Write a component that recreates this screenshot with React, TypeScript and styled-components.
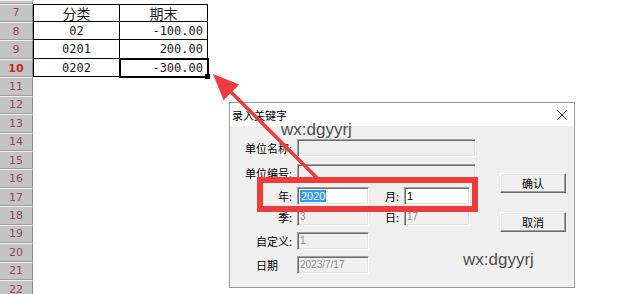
import React from "react";
import styled, { createGlobalStyle, css } from "styled-components";

const GlobalStyle = createGlobalStyle`
  html, body { margin: 0; padding: 0; background: #fff; overflow: hidden; }
  * { box-sizing: border-box; }
`;

const CJK = `"Noto Sans CJK SC", "Liberation Sans", sans-serif`;
const ROW_H = 18.45;

const Page = styled.div`
  position: relative;
  width: 638px;
  height: 294px;
  overflow: hidden;
  background: #fff;
`;

const Sheet = styled.div`
  display: flex;
  flex-direction: column;
`;

const Row = styled.div<{ $h?: number }>`
  display: flex;
  height: ${(p) => p.$h ?? ROW_H}px;
  flex: none;
`;

const RowHead = styled.div<{ $active?: boolean }>`
  width: 33px;
  height: 100%;
  background: #c4c4c4;
  border-top: 1px solid #f0f0f0;
  border-bottom: 1px solid #9e9e9e;
  border-right: 1px solid #8c8c8c;
  display: flex;
  align-items: center;
  justify-content: center;
  font-family: "DejaVu Sans", sans-serif;
  font-size: 11px;
  color: ${(p) => (p.$active ? "#c42a2a" : "#8a4c5c")};
  font-weight: ${(p) => (p.$active ? 700 : 400)};
`;

const Cell = styled.div<{
  $w: number;
  $first?: boolean;
  $top?: boolean;
  $align: "center" | "right";
  $head?: boolean;
  $selected?: boolean;
}>`
  position: relative;
  width: ${(p) => p.$w}px;
  height: 100%;
  border-right: 1px solid #000;
  border-bottom: 1px solid #000;
  ${(p) => p.$first && "border-left: 1px solid #000;"}
  ${(p) => p.$top && "border-top: 1px solid #000;"}
  display: flex;
  align-items: center;
  justify-content: ${(p) => (p.$align === "center" ? "center" : "flex-end")};
  padding-right: ${(p) => (p.$align === "right" ? 4 : 0)}px;
  font-family: ${(p) => (p.$head ? CJK : `"DejaVu Sans Mono", monospace`)};
  font-size: ${(p) => (p.$head ? 14 : 12)}px;
  color: #1c1c1c;
  ${(p) =>
    p.$selected &&
    css`
      outline: 2px solid #000;
      outline-offset: -1px;
      &::after {
        content: "";
        position: absolute;
        right: -3px;
        bottom: -3px;
        width: 5px;
        height: 5px;
        background: #000;
      }
    `}
`;

/* ---------- Dialog ---------- */

const Dialog = styled.div`
  position: absolute;
  left: 229px;
  top: 102px;
  width: 346px;
  height: 186px;
  border: 1px solid #9a9a9a;
  background: #f0f0f0;
  display: flex;
  flex-direction: column;
  font-family: ${CJK};
`;

const TitleBar = styled.div`
  height: 23px;
  flex: none;
  background: #fff;
  display: flex;
  align-items: center;
  justify-content: space-between;
  padding: 0 7px 0 2px;
`;

const Title = styled.span`
  font-size: 11px;
  color: #000;
`;

const Body = styled.div`
  flex: 1;
  display: grid;
  grid-template-columns: 270px 66px;
`;

const Form = styled.div`
  display: flex;
  flex-direction: column;
  padding-left: 10px;
`;

const FormRow = styled.div<{ $mt: number }>`
  display: flex;
  align-items: center;
  height: 18px;
  margin-top: ${(p) => p.$mt}px;
`;

const Label = styled.span<{ $w: number; $left?: boolean }>`
  width: ${(p) => p.$w}px;
  margin-right: 5px;
  flex: none;
  text-align: ${(p) => (p.$left ? "left" : "right")};
  padding-left: ${(p) => (p.$left ? 16 : 0)}px;
  font-size: 11px;
  line-height: 18px;
  color: #000;
  white-space: nowrap;
`;

const Field = styled.div<{ $w: number; $disabled?: boolean }>`
  width: ${(p) => p.$w}px;
  height: 18px;
  flex: none;
  border: 1px solid;
  border-color: #a0a0a0 #ffffff #ffffff #a0a0a0;
  box-shadow: inset 1px 1px 0 #6e6e6e, inset -1px -1px 0 #e3e3e3;
  background: ${(p) => (p.$disabled ? "#f0f0f0" : "#fff")};
  color: ${(p) => (p.$disabled ? "#8c8c8c" : "#000")};
  font-family: "Liberation Sans", sans-serif;
  font-size: ${(p) => (p.$disabled ? 10 : 11)}px;
  line-height: 16px;
  padding-left: 2px;
  white-space: nowrap;
  overflow: hidden;
`;

const Selected = styled.span`
  background: #3399ff;
  color: #fff;
  padding: 0 1px;
`;

const Buttons = styled.div`
  display: flex;
  flex-direction: column;
  gap: 19px;
  padding-top: 47px;
`;

const Button = styled.div`
  width: 66px;
  height: 20px;
  border: 1px solid;
  border-color: #ffffff #6a6a6a #6a6a6a #ffffff;
  box-shadow: inset -1px -1px 0 #a0a0a0, inset 1px 1px 0 #e8e8e8;
  background: #efefef;
  display: flex;
  align-items: center;
  justify-content: center;
  font-size: 11px;
  color: #000;
`;

const Watermark = styled.div<{ $x: number; $y: number }>`
  position: absolute;
  left: ${(p) => p.$x}px;
  top: ${(p) => p.$y}px;
  font-family: "Liberation Sans", sans-serif;
  font-size: 17px;
  line-height: 17px;
  color: #4e4e4e;
  pointer-events: none;
`;

const Overlay = styled.svg`
  position: absolute;
  left: 0;
  top: 0;
  pointer-events: none;
`;

const RedBox = styled.div`
  position: absolute;
  left: 257px;
  top: 177px;
  width: 221px;
  height: 35px;
  border: 6px solid #ef3b3b;
  pointer-events: none;
`;

const tableRows: Record<number, { a: string; b: string; head?: boolean; sel?: boolean }> = {
  7: { a: "分类", b: "期末", head: true },
  8: { a: "02", b: "-100.00" },
  9: { a: "0201", b: "200.00" },
  10: { a: "0202", b: "-300.00", sel: true },
};

const rowNums = Array.from({ length: 16 }, (_, i) => i + 7);

export default function App() {
  return (
    <Page>
      <GlobalStyle />
      <Sheet>
        <Row $h={3.5}>
          <RowHead />
        </Row>
        {rowNums.map((n) => {
          const r = tableRows[n];
          return (
            <Row key={n}>
              <RowHead $active={n === 10}>{n}</RowHead>
              {r && (
                <>
                  <Cell $w={87} $first $top={n === 7} $align="center" $head={r.head}>
                    {r.a}
                  </Cell>
                  <Cell
                    $w={88}
                    $top={n === 7}
                    $align={r.head ? "center" : "right"}
                    $head={r.head}
                    $selected={r.sel}
                  >
                    {r.b}
                  </Cell>
                </>
              )}
            </Row>
          );
        })}
      </Sheet>

      <Dialog>
        <TitleBar>
          <Title>录入关键字</Title>
          <svg width="10" height="10" viewBox="0 0 10 10">
            <path d="M0.5 0.5 L9.5 9.5 M9.5 0.5 L0.5 9.5" stroke="#222" strokeWidth="1" fill="none" />
          </svg>
        </TitleBar>
        <Body>
          <Form>
            <FormRow $mt={13}>
              <Label $w={52}>单位名称:</Label>
              <Field $w={179} $disabled />
            </FormRow>
            <FormRow $mt={7}>
              <Label $w={52}>单位编号:</Label>
              <Field $w={179} $disabled />
            </FormRow>
            <FormRow $mt={5}>
              <Label $w={52}>年:</Label>
              <Field $w={72}>
                <Selected>2020</Selected>
              </Field>
              <Label $w={30}>月:</Label>
              <Field $w={66}>1</Field>
            </FormRow>
            <FormRow $mt={3}>
              <Label $w={52}>季:</Label>
              <Field $w={72} $disabled>3</Field>
              <Label $w={30}>日:</Label>
              <Field $w={66} $disabled>17</Field>
            </FormRow>
            <FormRow $mt={6}>
              <Label $w={52}>自定义:</Label>
              <Field $w={72} $disabled>1</Field>
            </FormRow>
            <FormRow $mt={6}>
              <Label $w={52} $left>日期</Label>
              <Field $w={72} $disabled>2023/7/17</Field>
            </FormRow>
          </Form>
          <Buttons>
            <Button>确认</Button>
            <Button>取消</Button>
          </Buttons>
        </Body>
      </Dialog>

      <Watermark $x={281} $y={121}>wx:dgyyrj</Watermark>
      <Watermark $x={463} $y={251}>wx:dgyyrj</Watermark>

      <RedBox />
      <Overlay width="638" height="294" viewBox="0 0 638 294">
        <line x1="226" y1="87" x2="320" y2="181" stroke="#ef3b3b" strokeWidth="3.5" />
        <polygon points="213,74 223.6,100.2 239.2,84.6" fill="#ef3b3b" />
      </Overlay>
    </Page>
  );
}
